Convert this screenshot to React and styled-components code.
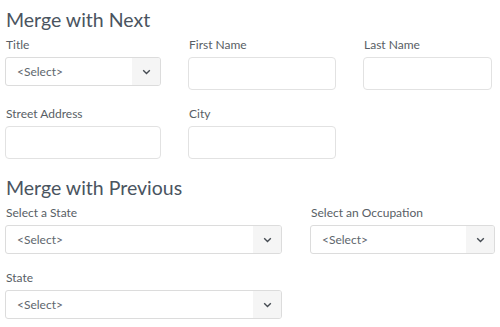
import React from 'react';
import styled, { createGlobalStyle } from 'styled-components';

const GlobalStyle = createGlobalStyle`
  html, body {
    margin: 0;
    padding: 0;
    background: #ffffff;
    overflow: hidden;
  }
  body {
    font-family: Lato, 'Noto Sans', sans-serif;
  }
`;

const Page = styled.div`
  padding: 8px 5px 0;
  width: 500px;
  box-sizing: border-box;
`;

const Heading = styled.h2`
  margin: ${(p) => (p.$first ? '0' : '17px')} 0 5px 1px;
  font-size: 19.5px;
  line-height: 24px;
  font-weight: 400;
  color: #4a5460;
`;

const Row = styled.div`
  display: grid;
  grid-template-columns: ${(p) => p.$cols};
  column-gap: ${(p) => p.$gap || '27px'};
  align-items: start;
  margin-bottom: ${(p) => (p.$last ? '0' : '16px')};
`;

const Field = styled.div`
  display: flex;
  flex-direction: column;
`;

const Label = styled.label`
  font-size: 12px;
  line-height: 16px;
  color: #585e65;
  margin: 0 0 4px 1px;
`;

const TextInput = styled.div`
  height: 33px;
  box-sizing: border-box;
  border: 1px solid #e2e2e2;
  border-radius: 4px;
  background: #fff;
`;

const SelectBox = styled.div`
  height: 29px;
  box-sizing: border-box;
  border: 1px solid #dcdcdc;
  border-radius: 3px;
  background: #fff;
  display: flex;
  align-items: stretch;
  overflow: hidden;
`;

const SelectText = styled.span`
  flex: 1;
  display: flex;
  align-items: center;
  padding-left: 11px;
  font-size: 12px;
  color: #60666d;
`;

const ArrowZone = styled.span`
  width: 28px;
  background: #f5f5f5;
  display: flex;
  align-items: center;
  justify-content: center;
`;

const Chevron = () => (
  <svg width="9" height="6" viewBox="0 0 9 6">
    <path d="M1.2 1.2 L4.5 4.4 L7.8 1.2" fill="none" stroke="#454b52" strokeWidth="1.4" />
  </svg>
);

const Select = () => (
  <SelectBox>
    <SelectText>&lt;Select&gt;</SelectText>
    <ArrowZone>
      <Chevron />
    </ArrowZone>
  </SelectBox>
);

const App = () => {
  return (
    <Page>
      <GlobalStyle />
      <Heading $first>Merge with Next</Heading>
      <Row $cols="156px 148px 129px">
        <Field>
          <Label>Title</Label>
          <Select />
        </Field>
        <Field>
          <Label>First Name</Label>
          <TextInput />
        </Field>
        <Field>
          <Label>Last Name</Label>
          <TextInput />
        </Field>
      </Row>
      <Row $cols="156px 148px" $last>
        <Field>
          <Label>Street Address</Label>
          <TextInput />
        </Field>
        <Field>
          <Label>City</Label>
          <TextInput />
        </Field>
      </Row>

      <Heading>Merge with Previous</Heading>
      <Row $cols="277px 185px" $gap="28px">
        <Field>
          <Label>Select a State</Label>
          <Select />
        </Field>
        <Field>
          <Label>Select an Occupation</Label>
          <Select />
        </Field>
      </Row>
      <Row $cols="277px" $last>
        <Field>
          <Label>State</Label>
          <Select />
        </Field>
      </Row>
    </Page>
  );
};

export default App;
